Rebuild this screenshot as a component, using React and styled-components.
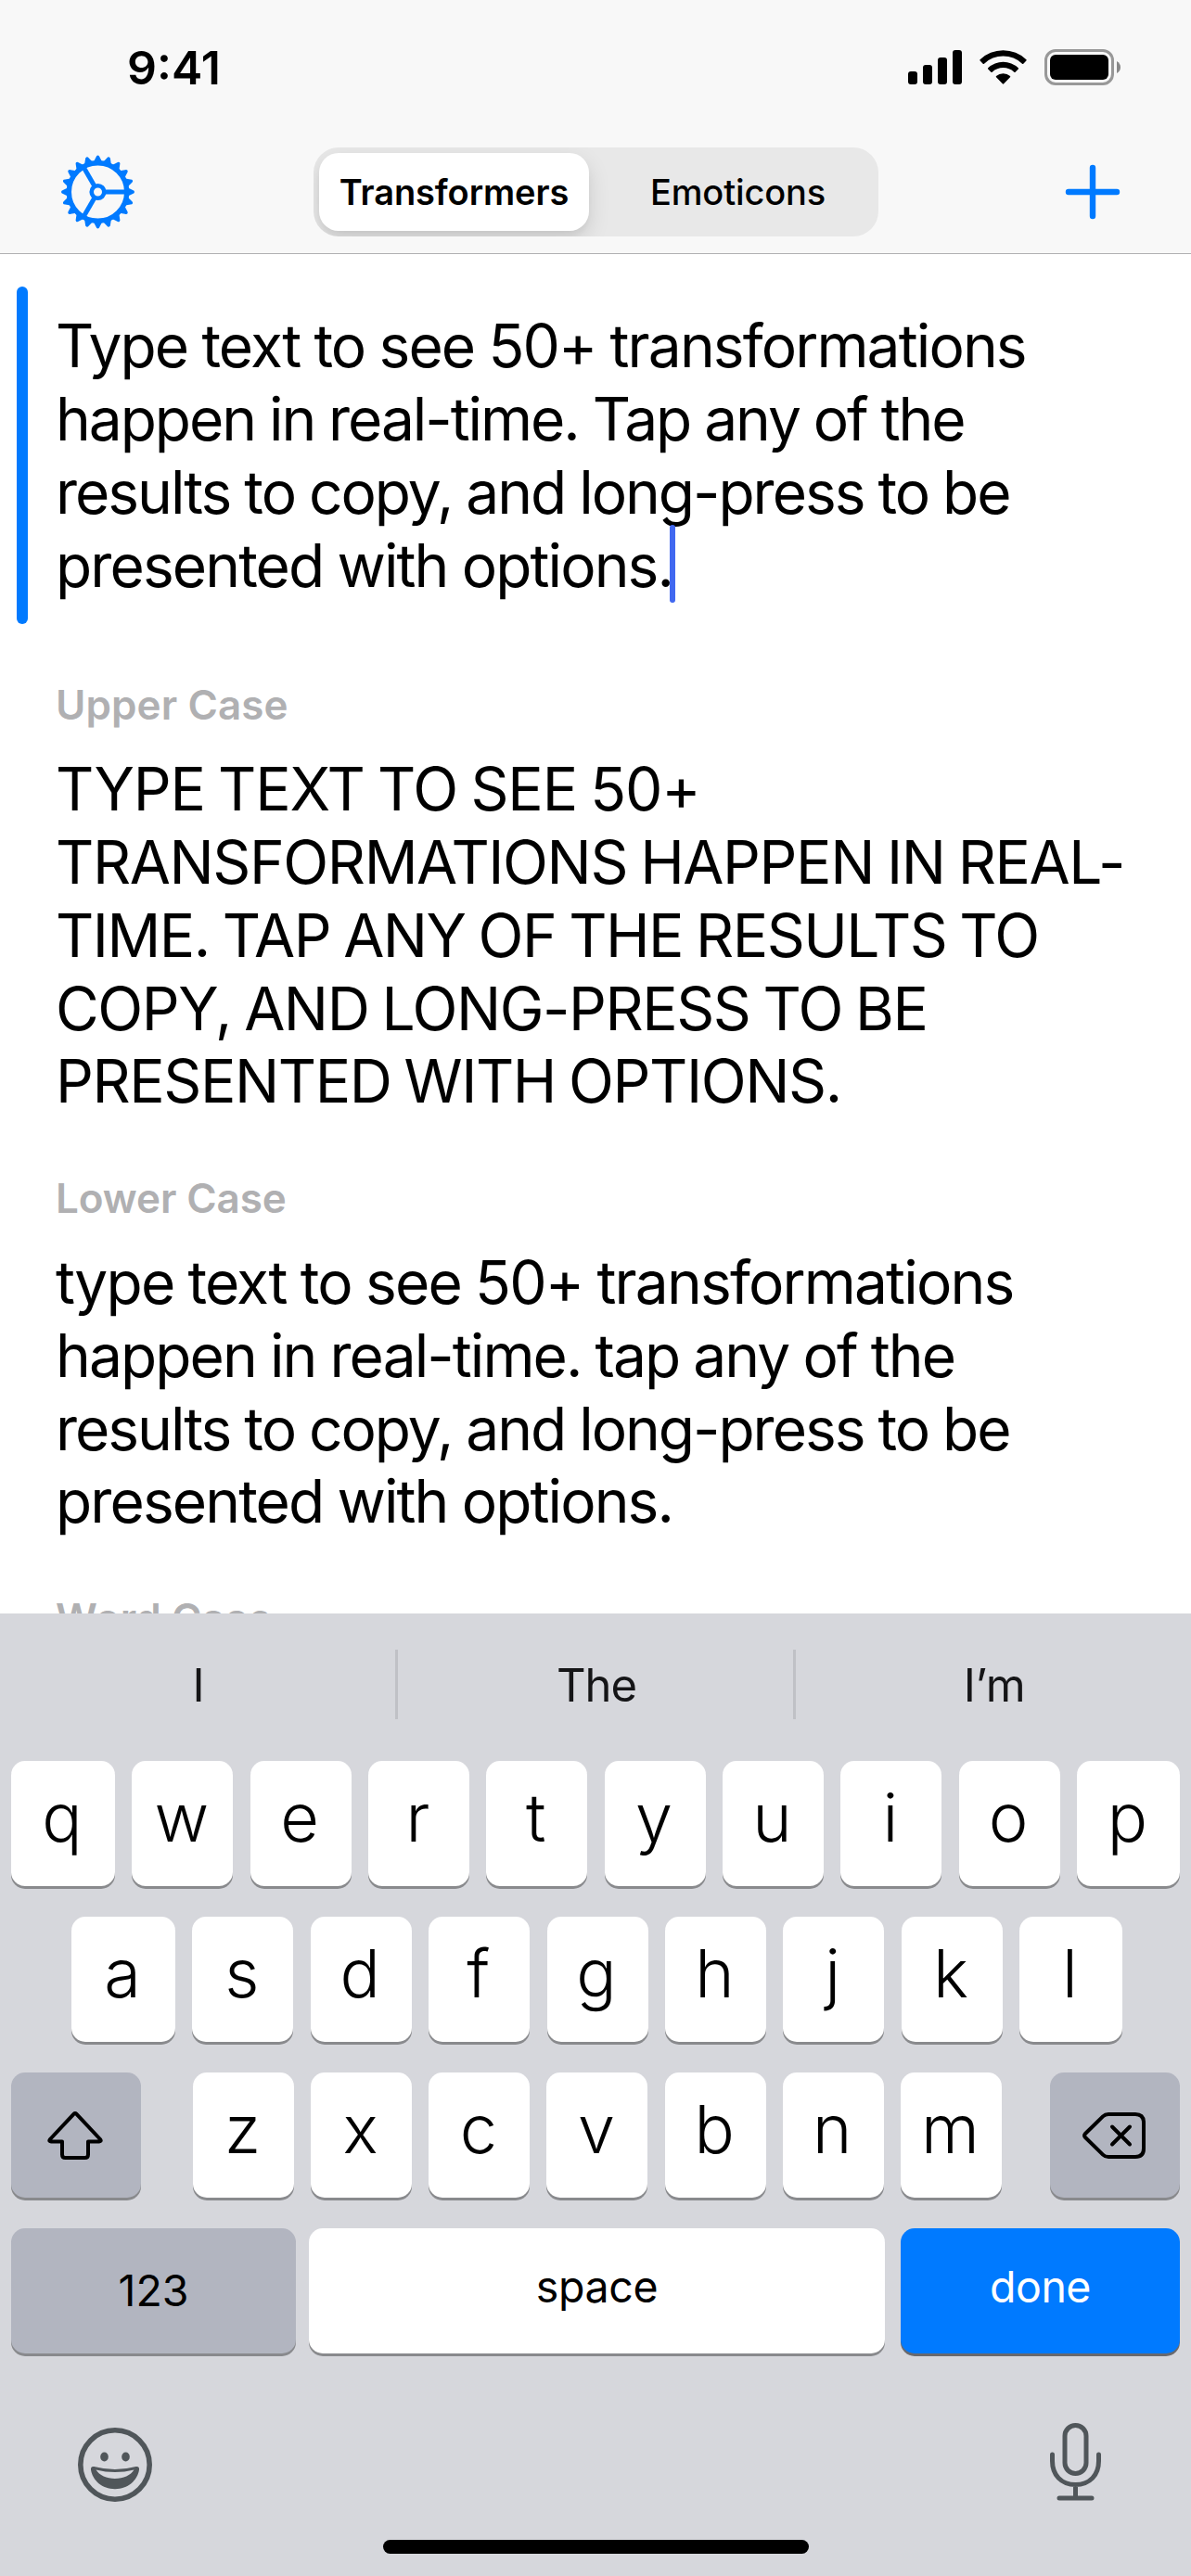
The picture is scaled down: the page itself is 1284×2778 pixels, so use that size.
import React from "react";
import styled, { createGlobalStyle } from "styled-components";

const GlobalStyle = createGlobalStyle`
  * { box-sizing: border-box; }
  html, body { margin: 0; padding: 0; background: #fff; }
  body { font-family: Inter, "Liberation Sans", sans-serif; color: #000; -webkit-font-smoothing: antialiased; }
  button { font: inherit; color: inherit; border: 0; margin: 0; padding: 0; background: none; }
  svg { display: block; flex: none; }
`;

const Screen = styled.div`
  width: 1284px;
  height: 2778px;
  display: flex;
  flex-direction: column;
  overflow: hidden;
  background: #fff;
`;

const Header = styled.header`
  height: 274px;
  flex: none;
  background: #f8f8f8;
  border-bottom: 1px solid #b0b0b2;
`;

const StatusBar = styled.div`
  height: 141px;
  display: flex;
  justify-content: space-between;
  align-items: flex-start;
  padding: 53px 76px 0 137px;
`;

const Clock = styled.div`
  font-size: 50px;
  line-height: 40px;
  font-weight: 600;
  letter-spacing: 0;
`;

const StatusIcons = styled.div`
  display: flex;
  gap: 19px;
`;

const NavBar = styled.nav`
  height: 132px;
  display: flex;
  justify-content: space-between;
  align-items: center;
  padding: 0 76px 0 65px;
`;

const IconButton = styled.button`
  display: flex;
`;

const Segments = styled.div`
  width: 609px;
  height: 96px;
  display: flex;
  padding: 6px;
  border-radius: 27px;
  background: #e8e8e8;
  margin-left: -8px;
  overflow: hidden;
`;

const Segment = styled.button`
  flex: none;
  width: ${(p) => (p.$active ? 291 : 306)}px;
  height: 84px;
  padding-bottom: 1px;
  padding-left: ${(p) => (p.$active ? 0 : 15)}px;
  border-radius: 21px;
  background: ${(p) => (p.$active ? "#fff" : "transparent")};
  box-shadow: ${(p) => (p.$active ? "0 9px 24px rgba(0,0,0,.12), 0 6px 6px rgba(0,0,0,.04)" : "none")};
  font-size: 38px;
  font-weight: ${(p) => (p.$active ? 600 : 450)};
  letter-spacing: ${(p) => p.$tracking}px;
`;

const Content = styled.main`
  height: 1466px;
  flex: none;
  overflow: hidden;
  padding: 35px 18px 0;
`;

const Editor = styled.section`
  display: flex;
  gap: 30px;
  height: 364px;
`;

const Accent = styled.div`
  width: 12px;
  border-radius: 6px;
  background: #007aff;
`;

const Paragraph = styled.div`
  padding-top: ${(p) => p.$top || 0}px;
  font-size: 64px;
  line-height: 79px;
  word-spacing: ${(p) => p.$wordSpacing}px;
  white-space: nowrap;
`;

const Line = styled.div`
  height: 78.76px;
  display: flex;
  align-items: center;
  letter-spacing: ${(p) => p.$tracking}px;
`;

const Caret = styled.span`
  width: 6px;
  height: 84px;
  margin: -4px 0 -2px -3px;
  border-radius: 3px;
  background: #4168f0;
`;

const Result = styled.section`
  padding: ${(p) => p.$top}px 0 0 42px;
`;

const Label = styled.h2`
  margin: 0;
  font-size: 44px;
  line-height: 54px;
  font-weight: 600;
  letter-spacing: ${(p) => p.$tracking}px;
  color: #b0b0b2;
`;

const Keyboard = styled.footer`
  height: 1038px;
  flex: none;
  background: #d6d7dc;
  display: flex;
  flex-direction: column;
`;

const Suggestions = styled.div`
  height: 159px;
  padding-top: 39px;
  display: flex;
`;

const Suggestion = styled.div`
  flex: none;
  width: ${(p) => p.$w}px;
  height: 75px;
  padding-left: 2px;
  padding-top: 1px;
  display: flex;
  align-items: center;
  justify-content: center;
  font-size: 49px;
  color: #151517;
  letter-spacing: ${(p) => p.$tracking || 0}px;
  & + & { border-left: 3px solid #c0c1c6; }
`;

const KeyRow = styled.div`
  height: 135px;
  margin-bottom: 33px;
  padding: 0 ${(p) => p.$right || 12}px 0 ${(p) => p.$left || 12}px;
  display: flex;
  justify-content: space-between;
`;

const KeyGroup = styled.div`
  width: 872px;
  display: flex;
  justify-content: space-between;
  margin-left: 4px;
`;

const keyColors = { light: "#fff", dark: "#b2b5c0", blue: "#007aff" };

const Key = styled.button`
  width: ${(p) => p.$w || 109}px;
  height: 135px;
  display: flex;
  align-items: center;
  justify-content: center;
  margin-right: ${(p) => p.$after || 0}px;
  padding-bottom: ${(p) => p.$lift ?? 15}px;
  padding-right: ${(p) => (p.$word ? 0 : 2)}px;
  border-radius: 15px;
  background: ${(p) => keyColors[p.$tone || "light"]};
  color: ${(p) => (p.$tone === "blue" ? "#fff" : "#000")};
  box-shadow: 0 3px 0 ${(p) => (p.$tone === "blue" ? "#68696e" : "#898a8d")};
  font-size: ${(p) => (p.$word ? 46.5 : 72)}px;
  font-weight: ${(p) => (p.$word ? 400 : 360)};
  letter-spacing: ${(p) => p.$tracking || 0}px;
`;

const BottomBar = styled.div`
  height: 160px;
  display: flex;
  justify-content: space-between;
  padding: 41px 95px 0 84px;
`;

const EmojiButton = styled(IconButton)`
  height: 80px;
  margin-top: 6px;
`;

const HomeIndicator = styled.div`
  width: 459px;
  height: 15px;
  margin: 8px auto 0;
  border-radius: 8px;
  background: #000;
`;

function GearIcon() {
  return (
    <svg width="80" height="80" viewBox="-40.5 -40 80 80" fill="none" stroke="#007aff">
      <circle r="31.2" strokeWidth="5.4" />
      <circle r="6.8" strokeWidth="4.6" />
      {[0, 120, 240].map((a) => (
        <path key={a} d="M8 0H30" strokeWidth="5" transform={`rotate(${a})`} />
      ))}
      {Array.from({ length: 20 }, (_, i) => (
        <path key={i} d="M32.5 -4.6L37.6 -2Q39.5 -1.4 39.5 0Q39.5 1.4 37.6 2L32.5 4.6Z" fill="#007aff" stroke="none" transform={`rotate(${i * 18})`} />
      ))}
    </svg>
  );
}

function PlusIcon() {
  return (
    <svg width="60" height="60" viewBox="0 0 60 60" stroke="#007aff" strokeWidth="6.4" strokeLinecap="round">
      <path d="M30 4V56M4 30H56" />
    </svg>
  );
}

function SignalIcon() {
  return (
    <svg width="58" height="39" viewBox="0 0 58 39">
      {[14, 21, 29, 37].map((h, i) => (
        <rect key={h} x={i * 16} y={38 - h} width="10" height={h} rx="3" />
      ))}
    </svg>
  );
}

function WifiIcon() {
  return (
    <svg width="51" height="39" viewBox="0 0 51 39">
      <path d="M0.6 11.2A36 36 0 0 1 50.4 11.2Q51 11.8 50.4 12.5L47.3 15.7Q46.7 16.2 46 15.7A29.5 29.5 0 0 0 5 15.7Q4.3 16.2 3.7 15.7L0.6 12.5Q0 11.8 0.6 11.2Z" />
      <path d="M9.2 20.3A23.8 23.8 0 0 1 41.8 20.3Q42.5 21 41.8 21.6L38.6 24.7Q38 25.3 37.3 24.7A17.4 17.4 0 0 0 13.7 24.7Q13 25.3 12.4 24.7L9.2 21.6Q8.5 21 9.2 20.3Z" />
      <path d="M18 29A11.4 11.4 0 0 1 33 29Q33.6 29.7 33 30.3L26.2 37.3Q25.5 38 24.8 37.3L18 30.3Q17.4 29.7 18 29Z" />
    </svg>
  );
}

function BatteryIcon() {
  return (
    <svg width="82" height="39" viewBox="0 0 82 39">
      <rect x="1.5" y="1.5" width="72" height="36" rx="10.5" fill="none" stroke="#989898" strokeWidth="3" />
      <rect x="6" y="6" width="63" height="27" rx="6" />
      <path d="M78 13Q82 15.5 82 19.5T78 26Z" fill="#888" />
    </svg>
  );
}

function ShiftIcon() {
  return (
    <svg width="60" height="54" viewBox="0 0 60 54" fill="none" stroke="#000" strokeWidth="4" strokeLinejoin="round">
      <path d="M28.7 3.6Q30 2.2 31.3 3.6L57 31Q58.8 33.4 56 33.4H44V47.5Q44 51 40.5 51H19.5Q16 51 16 47.5V33.4H4Q1.2 33.4 3 31Z" />
    </svg>
  );
}

function DeleteIcon() {
  return (
    <svg width="70" height="52" viewBox="0 0 70 52" fill="none" stroke="#000" strokeWidth="4" strokeLinejoin="round" strokeLinecap="round">
      <path d="M29 3H58Q67 3 67 12V40Q67 49 58 49H29Q25.5 49 23 46.6L4 28Q2 26 4 24L23 5.4Q25.5 3 29 3Z" />
      <path d="M33 16.5L52 35.5M52 16.5L33 35.5" />
    </svg>
  );
}

function EmojiIcon() {
  return (
    <svg width="80" height="80" viewBox="0 0 80 80" fill="#50565a">
      <circle cx="40" cy="40" r="37.2" fill="none" stroke="#50565a" strokeWidth="5.6" />
      <ellipse cx="28.5" cy="31.5" rx="4.3" ry="5" />
      <ellipse cx="51.5" cy="31.5" rx="4.3" ry="5" />
      <path fillRule="evenodd" d="M17.5 42Q40 48 62.5 42Q66.5 41.3 66 45.5C64 57 54 66.2 40 66.2S16 57 14 45.5Q13.5 41.3 17.5 42ZM19.5 45.6C23 51.5 31 55 40 55S57 51.5 60.5 45.6Q40 50.6 19.5 45.6Z" />
    </svg>
  );
}

function MicIcon() {
  return (
    <svg width="58" height="86" viewBox="0 0 58 86" fill="none" stroke="#50565a" strokeWidth="5" strokeLinecap="round">
      <rect x="17" y="3.5" width="23" height="52" rx="11.5" />
      <path d="M3.5 35V42C3.5 57 13 67.5 28.5 67.5S53.5 57 53.5 42V35M28.5 67.5V82M11 82H46" />
    </svg>
  );
}

const original = [
  ["Type text to see 50+ transformations", -1.87],
  ["happen in real-time. Tap any of the", -2.05],
  ["results to copy, and long-press to be", -2.02],
  ["presented with options.", -1.88],
];
const upper = [
  ["TYPE TEXT TO SEE 50+", -1.15],
  ["TRANSFORMATIONS HAPPEN IN REAL-", -1.4],
  ["TIME. TAP ANY OF THE RESULTS TO", -1.5],
  ["COPY, AND LONG-PRESS TO BE", -1.44],
  ["PRESENTED WITH OPTIONS.", -1.42],
];
const lower = [
  ["type text to see 50+ transformations", -1.82],
  ["happen in real-time. tap any of the", -1.91],
  ["results to copy, and long-press to be", -2.02],
  ["presented with options.", -1.88],
];

function TextLines({ lines, caret, wordSpacing = -1 }) {
  return (
    <Paragraph $top={24.5} $wordSpacing={wordSpacing}>
      {lines.map(([text, tracking], i) => (
        <Line key={text} $tracking={tracking}>
          {text}
          {caret && i === lines.length - 1 && <Caret />}
        </Line>
      ))}
    </Paragraph>
  );
}

const edgeWidth = (i, n) => (i === 0 ? 112 : i === n - 1 ? 111 : 109);

function LetterKeys({ letters, edges }) {
  return [...letters].map((c, i) => (
    <Key key={c} $w={edges ? edgeWidth(i, letters.length) : 109}>{c}</Key>
  ));
}

export default function App() {
  return (
    <Screen>
      <GlobalStyle />
      <Header>
        <StatusBar>
          <Clock>9:41</Clock>
          <StatusIcons>
            <SignalIcon />
            <WifiIcon />
            <BatteryIcon />
          </StatusIcons>
        </StatusBar>
        <NavBar>
          <IconButton aria-label="Settings"><GearIcon /></IconButton>
          <Segments>
            <Segment $active $tracking={-0.1}>Transformers</Segment>
            <Segment $tracking={-0.15}>Emoticons</Segment>
          </Segments>
          <IconButton aria-label="Add"><PlusIcon /></IconButton>
        </NavBar>
      </Header>
      <Content>
        <Editor>
          <Accent />
          <TextLines lines={original} caret />
        </Editor>
        <Result $top={60}>
          <Label $tracking={0.1}>Upper Case</Label>
          <TextLines lines={upper} wordSpacing={-2.5} />
        </Result>
        <Result $top={59.5}>
          <Label $tracking={-0.1}>Lower Case</Label>
          <TextLines lines={lower} />
        </Result>
        <Result $top={60}>
          <Label $tracking={0.1}>Word Case</Label>
        </Result>
      </Content>
      <Keyboard>
        <Suggestions>
          <Suggestion $w={426}>I</Suggestion>
          <Suggestion $w={429} $tracking={-1}>The</Suggestion>
          <Suggestion $w={429} $tracking={-0.5}>I’m</Suggestion>
        </Suggestions>
        <KeyRow><LetterKeys letters="qwertyuiop" edges /></KeyRow>
        <KeyRow $left={77} $right={74}><LetterKeys letters="asdfghjkl" edges /></KeyRow>
        <KeyRow>
          <Key $tone="dark" $w={140} $lift={0} aria-label="Shift"><ShiftIcon /></Key>
          <KeyGroup><LetterKeys letters="zxcvbnm" /></KeyGroup>
          <Key $tone="dark" $w={140} $lift={0} aria-label="Delete"><DeleteIcon /></Key>
        </KeyRow>
        <KeyRow>
          <Key $tone="dark" $w={307} $word $lift={1}>123</Key>
          <Key $w={621} $word $lift={9} $after={3} $tracking={-0.4}>space</Key>
          <Key $tone="blue" $w={301} $word $lift={9} $tracking={-0.5}>done</Key>
        </KeyRow>
        <BottomBar>
          <EmojiButton aria-label="Emoji"><EmojiIcon /></EmojiButton>
          <MicIcon />
        </BottomBar>
        <HomeIndicator />
      </Keyboard>
    </Screen>
  );
}
